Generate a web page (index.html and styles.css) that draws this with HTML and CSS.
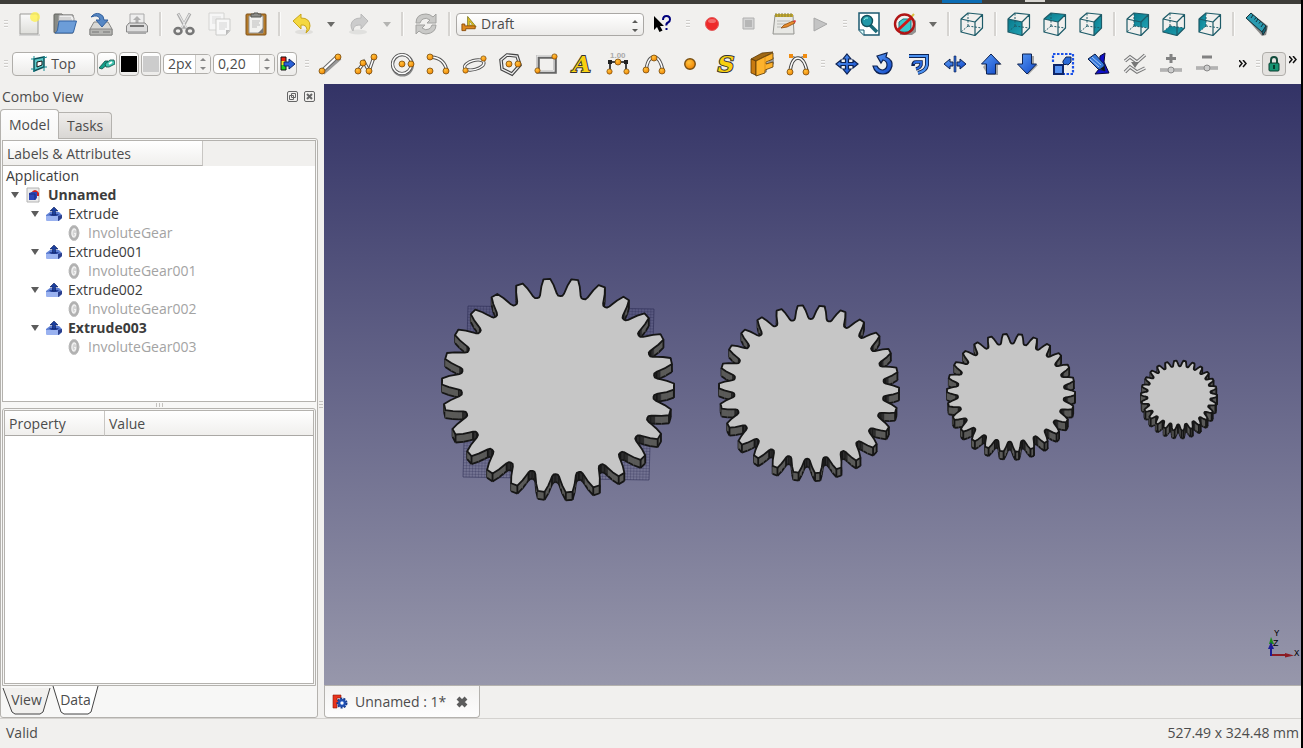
FILE: index.html
```
<!DOCTYPE html>
<html lang="en">
<head>
    <meta charset="UTF-8">
    <meta name="viewport" content="width=device-width, initial-scale=1.0">
    <title>FreeCAD</title>
    <link rel="stylesheet" href="styles.css">
</head>
<body>
    <!-- shared icon parts -->
    <svg class="sprite" aria-hidden="true">
        <defs>
            <radialGradient id="orange" cx="0.4" cy="0.35" r="0.7">
                <stop offset="0" stop-color="#ffc23c"/>
                <stop offset="1" stop-color="#f08000"/>
            </radialGradient>
            <linearGradient id="teal" x1="0" y1="0" x2="1" y2="1">
                <stop offset="0" stop-color="#087a8c"/>
                <stop offset="1" stop-color="#22a2b4"/>
            </linearGradient>
            <linearGradient id="blue" x1="0" y1="0" x2="1" y2="1">
                <stop offset="0" stop-color="#5b9cf5"/>
                <stop offset="1" stop-color="#1048c8"/>
            </linearGradient>
            <linearGradient id="paper" x1="0" y1="0" x2="0" y2="1">
                <stop offset="0" stop-color="#fafafa"/>
                <stop offset="1" stop-color="#dededa"/>
            </linearGradient>
            <linearGradient id="sky" x1="0" y1="0" x2="0" y2="1">
                <stop offset="0" stop-color="#333366"/>
                <stop offset="1" stop-color="#9797ab"/>
            </linearGradient>
        </defs>
        <symbol id="dot" viewBox="0 0 8 8">
            <circle cx="4" cy="4" r="3" fill="url(#orange)" stroke="#7a5010" stroke-width="0.8"/>
        </symbol>
        <symbol id="cube" viewBox="0 0 24 24">
            <g fill="none" stroke="#1d5b68" stroke-width="1.2" stroke-linejoin="round">
                <path d="M8 14V1M8 14l14 2M8 14l-7 6" stroke-dasharray="2 1.5" stroke-width="1"/>
                <path d="M1 7l14 3v13.500L1 20zM1 7l7-6 14.500 1.500L15 10M22.500 2.500V16L15 23.500"/>
            </g>
        </symbol>
        <symbol id="extrude" viewBox="0 0 16 16">
            <path d="M0 9l4-3h9l3 3v3l-3 3H1l-1-2z" fill="#5f80d4"/>
            <path d="M0 10h12v5H1l-1-1z" fill="#9ab2f0"/>
            <path d="M12 10l4-1v3l-4 3z" fill="#2b3f8c"/>
            <path d="M3 8h10l-2 2H5z" fill="#27429c"/>
            <path d="M8 1l4 4h-2.500v4h-3V5H4z" fill="#1c3f9c" stroke="#0c1c5c" stroke-width="0.6"/>
        </symbol>
        <symbol id="gear" viewBox="0 0 16 16">
            <ellipse cx="8" cy="8" rx="4" ry="6.500" fill="#d4d4d4" stroke="#b0b0b0" stroke-width="2.500"/>
            <ellipse cx="8" cy="8" rx="5" ry="7.500" fill="none" stroke="#c4c4c4" stroke-dasharray="1.500 1"/>
            <path d="M10 5.500q-1-2-2.500-1T6 8q0 4 2 3.500l1.500-1V8.500H8" fill="none" stroke="#f2f2f2" stroke-width="1.200"/>
        </symbol>
    </svg>

    <div class="topstrip"><span class="strip-blue"></span><span class="strip-grey"></span></div>

    <nav class="toolbar" aria-label="File and view tools">
        <span class="handle first"></span>
        <button class="tool" aria-label="New">
            <svg viewBox="0 0 24 24"><path d="M3 2h18v20H3z" fill="url(#paper)" stroke="#9b9b98"/><path d="M2 23h21" stroke="#bbb"/><circle cx="18" cy="5" r="5" fill="#fdf04a" opacity="0.75"/><circle cx="18" cy="5" r="2.500" fill="#fff36c"/></svg>
        </button>
        <button class="tool" aria-label="Open">
            <svg viewBox="0 0 24 24"><path d="M1 3q0-1 1-1h7l1 1h10v18H2q-1 0-1-1z" fill="#888a85" stroke="#62635f"/><path d="M6 3h13l2 3v6H5z" fill="#eee" stroke="#999"/><path d="M6 6h12M6 8h13" stroke="#bbb"/><path d="M6 9h17.500l-3 11q-.5 1-2 1H2q2-1 2.500-3z" fill="#6c9dd8" stroke="#3465a4"/></svg>
        </button>
        <button class="tool" aria-label="Save">
            <svg viewBox="0 0 24 24"><path d="M5 10h14l4 7v6H1v-6z" fill="#d8d8d5" stroke="#868684"/><path d="M1 17h22v6H1z" fill="#b5b5b2" stroke="#868684"/><path d="M3 20h7M14 20h7" stroke="#777"/><path d="M2 5q4-5 9-3 4 1.500 4 6h4l-6 7-6-7h4q0-3-3-4-2-.5-6 1z" fill="#5587c4" stroke="#33619e"/></svg>
        </button>
        <button class="tool" aria-label="Print">
            <svg viewBox="0 0 24 24"><path d="M5 2h14v13H5z" fill="#eee" stroke="#aaa"/><path d="M12 4l4 4h-2.500v4h-3V8H8z" fill="#b0b0b0"/><path d="M4 11h16l2.500 3v6h-21v-6z" fill="#ddd" stroke="#888"/><path d="M5 14h14" stroke="#777" stroke-width="2"/><path d="M3 20h18v2H3z" fill="#aaa"/></svg>
        </button>
        <span class="sep"></span>
        <button class="tool" aria-label="Cut">
            <svg viewBox="0 0 24 24"><path d="M6 1.500l8 15M18 1.500l-8 15" stroke="#aaa" stroke-width="3"/><path d="M6.500 2l8 14M17.500 2l-8 14" stroke="#e8e8e8" stroke-width="1.200"/><g fill="none" stroke="#777" stroke-width="2.500"><ellipse cx="6" cy="19" rx="3.500" ry="3"/><ellipse cx="18" cy="19" rx="3.500" ry="3"/></g></svg>
        </button>
        <button class="tool" aria-label="Copy">
            <svg viewBox="0 0 24 24"><path d="M1 1h15v17H1z" fill="#f6f6f6" stroke="#d4d4d2"/><path d="M4 5h9M4 7h9M4 9h4M4 11h4" stroke="#ddd"/><path d="M8 7h14v12l-4 4H8z" fill="#f8f8f8" stroke="#cbcbc9"/><path d="M11 11h8M11 13h8M11 15h8M11 17h6" stroke="#d4d4d4"/><path d="M22 18l-4 5v-5z" fill="#bbb"/></svg>
        </button>
        <button class="tool" aria-label="Paste">
            <svg viewBox="0 0 24 24"><rect x="2" y="2" width="20" height="21" rx="1" fill="#b47a28" stroke="#80521a"/><path d="M5 4h14v17H5z" fill="#f2f2f0" stroke="#999"/><path d="M8 9h8M8 11h7M8 13h8M8 15h5" stroke="#bbb"/><path d="M19 16l-5 5h5z" fill="#777"/><path d="M7 5V2h3V1h4v1h3v3z" fill="#8c8c88" stroke="#555753"/></svg>
        </button>
        <span class="sep"></span>
        <button class="tool" aria-label="Undo">
            <svg viewBox="0 0 24 24"><ellipse cx="13" cy="20" rx="9" ry="2.500" fill="#e0dfdc"/><path d="M2 9l8-7v4q9 0 9 8 0 4-4 7 2-4 0-6.500-2-2-5-1.500V17z" fill="#f4d840" stroke="#c9a51c"/></svg>
        </button>
        <button class="tool-arrow" aria-label="Undo list"></button>
        <button class="tool" aria-label="Redo">
            <svg viewBox="0 0 24 24"><ellipse cx="11" cy="20" rx="9" ry="2.500" fill="#e0e0de"/><path d="M21 9l-7-7v4q-9 0-10 7 0 4 2 6 0-4 3-5.500 2-.5 5-.5v4z" fill="#ccc" stroke="#bababa"/></svg>
        </button>
        <button class="tool-arrow faded" aria-label="Redo list"></button>
        <span class="sep"></span>
        <button class="tool" aria-label="Refresh">
            <svg viewBox="0 0 24 24"><g fill="#c9c9c7" stroke="#a2a2a0"><path d="M2 11q0-9 10-9 4 0 7 3l3-3v9h-9l3-3q-4-3-7-1-2 1-3 4z"/><path d="M22 13q0 8-10 9-4 0-7-3l-3 3v-9h9l-3 3q4 3 7 1 2-1 3-4z"/></g></svg>
        </button>
        <span class="sep"></span>
        <div class="workbench">
            <svg class="wb-icon" viewBox="0 0 18 16"><path d="M7 11V0l9 11z" fill="#e2c21c" stroke="#8a8430"/><path d="M9 9V5l3 4z" fill="#f6f5f2" stroke="#8a8430" stroke-width="0.600"/><path d="M1 8h3v2h11v3H5v2H1z" fill="#e08a1c" stroke="#8c4c08"/></svg>
            <select aria-label="Workbench"><option>Draft</option></select>
            <svg class="wb-arrows" viewBox="0 0 6 12"><path d="M0 3l3-3 3 3zM0 9l3 3 3-3z" fill="#5b5b58"/></svg>
        </div>
        <button class="tool" aria-label="What's this?">
            <svg viewBox="0 0 24 24"><path d="M3 4v14l3-3 2.500 5 3-1.500L9 14h4z"/><path d="M12 8q0-4 3.500-4T19 7.500q0 2-2 3t-1.500 3M15.500 16v2" fill="none" stroke="#00007c" stroke-width="2"/></svg>
        </button>
        <span class="handle"></span>
        <button class="tool" aria-label="Record macro">
            <svg viewBox="0 0 24 24"><circle cx="12" cy="12" r="6.500" fill="#ee2a2a" stroke="#e25c5c"/><ellipse cx="12" cy="9" rx="4" ry="2" fill="#f46a6a"/></svg>
        </button>
        <button class="tool" aria-label="Stop macro">
            <svg viewBox="0 0 24 24"><path d="M7 6h11v11H7z" fill="#d4d4d4" stroke="#b0b0b0"/><path d="M9 8h7v7H9z" fill="#b6b6b6"/></svg>
        </button>
        <button class="tool" aria-label="Macros">
            <svg viewBox="0 0 24 24"><path d="M3 3h18l1 19H1z" fill="#e8e8e4" stroke="#92928e"/><path d="M3 2h18v3H3z" fill="#c4a82c"/><path d="M4 1v4M7 1v4M10 1v4M13 1v4M16 1v4M19 1v4" stroke="#8a8238"/><path d="M5 9h13M5 12h9M5 15h4" stroke="#b8b8b4"/><path d="M9 16l3-3 9-4 2 2-8 4z" fill="#e88c2c" stroke="#8c4c10" stroke-width="0.800"/><path d="M21 9l2 2 1-2-1-1z" fill="#e04040"/></svg>
        </button>
        <button class="tool" aria-label="Run macro">
            <svg viewBox="0 0 24 24"><path d="M6 6l13 6-13 7z" fill="#c4c4c4" stroke="#a8a8a8"/></svg>
        </button>
        <span class="handle"></span>
        <button class="tool" aria-label="Fit all">
            <svg viewBox="0 0 24 24"><path d="M2 1h20v22H7l-5-5z" fill="#fff" stroke="#1c5a70" stroke-width="1.500"/><path d="M2 18h5v5" fill="#dff" stroke="#1c5a70"/><path d="M13 13l7 7" stroke="#1b6a78" stroke-width="3.500"/><circle cx="10" cy="9" r="5.500" fill="#2297a8" stroke="#14505c" stroke-width="1.400"/><path d="M7 8q1-3 4-2" stroke="#9fe" fill="none"/></svg>
        </button>
        <button class="tool" aria-label="Draw style">
            <svg viewBox="0 0 24 24"><path d="M6 10l4-4h10l3 3v11l-4 3H7z" fill="#333" opacity="0.500"/><circle cx="11.500" cy="12" r="9.500" fill="#f1f0ee"/><path d="M6 10l4-3h8v10l-3 3H6z" fill="#3cc8cc" stroke="#1c7480"/><path d="M13 11l8-9" stroke="#d8c040" stroke-width="2"/><circle cx="11.500" cy="12" r="9.500" fill="none" stroke="#b01414" stroke-width="2.400"/><path d="M5 18L18 6" stroke="#d01818" stroke-width="2.800"/></svg>
        </button>
        <button class="tool-arrow" aria-label="Draw style list"></button>
        <span class="sep"></span>
        <button class="tool" aria-label="Axonometric"><svg viewBox="0 0 24 24"><use href="#cube"/></svg></button>
        <span class="sep"></span>
        <button class="tool" aria-label="Front"><svg viewBox="0 0 24 24"><path d="M1 7l14 3v13.500L1 20z" fill="url(#teal)"/><use href="#cube"/></svg></button>
        <button class="tool" aria-label="Top"><svg viewBox="0 0 24 24"><path d="M1 7l7-6 14.500 1.500L15 10z" fill="url(#teal)"/><use href="#cube"/></svg></button>
        <button class="tool" aria-label="Right"><svg viewBox="0 0 24 24"><path d="M15 10l7.500-7.500V16L15 23.500z" fill="url(#teal)"/><use href="#cube"/></svg></button>
        <span class="sep"></span>
        <button class="tool" aria-label="Rear"><svg viewBox="0 0 24 24"><path d="M8 1l14.500 1.500V16L8 14z" fill="url(#teal)"/><use href="#cube"/></svg></button>
        <button class="tool" aria-label="Bottom"><svg viewBox="0 0 24 24"><path d="M1 20l7-6 14.500 2-7.500 7.500z" fill="url(#teal)"/><use href="#cube"/></svg></button>
        <button class="tool" aria-label="Left"><svg viewBox="0 0 24 24"><path d="M1 7l7-6v13l-7 6z" fill="url(#teal)"/><use href="#cube"/></svg></button>
        <span class="sep"></span>
        <button class="tool" aria-label="Measure distance">
            <svg viewBox="0 0 24 24"><path d="M2 7l4-6 17 13-2 9-4 1z" fill="#333" opacity="0.550"/><path d="M1 6l5-5 15 13-4 6z" fill="#2a9ab0" stroke="#17343c"/><path d="M17 20l4-6v4l-3 5z" fill="#176878" stroke="#17343c"/><path d="M8 3l-2 3M11 5.500l-1.500 2M13 7l-2 3M15.500 9.500l-1.500 2M18 12l-2 3" stroke="#12303a"/></svg>
        </button>
    </nav>

    <nav class="toolbar" aria-label="Draft tools">
        <span class="handle first"></span>
        <div class="draft-tray">
            <button class="box plane">
                <svg viewBox="0 0 16 16"><path d="M3 3l10-2v10L3 15z" fill="#5ccaca" stroke="#0c5058" stroke-width="1.500"/><path d="M6 6l5-1v4l-5 2z" fill="#fff" stroke="#111"/><path d="M3 0v3H0M13 0v2l3-1M0 13h3v3M13 11h3M13 11v4" stroke="#138a90" fill="none"/></svg>
                <span>Top</span>
            </button>
            <button class="box small" aria-label="Construction mode">
                <svg viewBox="0 0 16 16"><path d="M0 12l6-7 3 0v3l-6 5z" fill="#14a08c" stroke="#0c4c44" stroke-width="0.800"/><path d="M6 8l5-4h4l1 4-6 3H7z" fill="#40c4b0" stroke="#0c4c44" stroke-width="0.800"/><path d="M10 8l3-2" stroke="#fff" stroke-width="2"/></svg>
            </button>
            <button class="box small" aria-label="Line colour"><span class="swatch black"></span></button>
            <button class="box small" aria-label="Face colour"><span class="swatch grey"></span></button>
            <div class="spin spin-width">
                <input type="text" value="2px" aria-label="Line width">
                <div class="spin-buttons"><button class="up" aria-label="Increase width"></button><button class="down" aria-label="Decrease width"></button></div>
            </div>
            <div class="spin spin-size">
                <input type="text" value="0,20" aria-label="Font size">
                <div class="spin-buttons"><button class="up" aria-label="Increase size"></button><button class="down" aria-label="Decrease size"></button></div>
            </div>
            <button class="box small" aria-label="Apply style">
                <svg viewBox="0 0 16 16"><path d="M2 1h5v5H2z" fill="#f02010"/><path d="M2 5h5v5H2z" fill="#f8e020"/><path d="M2 9h5v5H2z" fill="#20d020"/><path d="M2 1h5v13H2z" fill="none" stroke="#111"/><path d="M5 6h5V3l6 5-6 5v-3H5z" fill="#2a62d8" stroke="#0c2468"/></svg>
            </button>
        </div>
        <span class="handle wide"></span>
        <button class="tool" aria-label="Line">
            <svg viewBox="0 0 24 24"><path d="M5 21L22 6" stroke="#999" stroke-width="4"/><path d="M4 19L20 4" stroke="#666" stroke-width="4"/><path d="M4 19L20 4" stroke="#fff" stroke-width="2.200"/><use href="#dot" x="0" y="15" width="8" height="8"/><use href="#dot" x="16" y="1" width="8" height="8"/></svg>
        </button>
        <button class="tool" aria-label="Wire">
            <svg viewBox="0 0 24 24"><path d="M4 19l6-9 5 9 5-14" fill="none" stroke="#555" stroke-width="3.500"/><path d="M4 19l6-9 5 9 5-14" fill="none" stroke="#fff" stroke-width="1.500"/><use href="#dot" x="0" y="15" width="8" height="8"/><use href="#dot" x="5" y="7" width="8" height="8"/><use href="#dot" x="11" y="15" width="8" height="8"/><use href="#dot" x="16" y="1" width="8" height="8"/></svg>
        </button>
        <button class="tool" aria-label="Circle">
            <svg viewBox="0 0 24 24"><circle cx="12.500" cy="13" r="10" fill="none" stroke="#888" stroke-width="3"/><circle cx="12" cy="12" r="9.500" fill="none" stroke="#555" stroke-width="3.200"/><circle cx="12" cy="12" r="9.500" fill="none" stroke="#fff" stroke-width="1.600"/><use href="#dot" x="8" y="8" width="8" height="8"/><use href="#dot" x="17" y="8" width="8" height="8"/></svg>
        </button>
        <button class="tool" aria-label="Arc">
            <svg viewBox="0 0 24 24"><path d="M5 5q14 1 16 15" fill="none" stroke="#555" stroke-width="3.500"/><path d="M5 5q14 1 16 15" fill="none" stroke="#fff" stroke-width="1.500"/><use href="#dot" x="0" y="1" width="8" height="8"/><use href="#dot" x="0" y="15" width="8" height="8"/><use href="#dot" x="16" y="15" width="8" height="8"/></svg>
        </button>
        <button class="tool" aria-label="Ellipse">
            <svg viewBox="0 0 24 24"><g fill="none" transform="rotate(-15 12 12)"><ellipse cx="12" cy="13" rx="10" ry="4.500" stroke="#555" stroke-width="3.200"/><ellipse cx="12" cy="13" rx="10" ry="4.500" stroke="#fff" stroke-width="1.400"/></g><use href="#dot" x="0" y="15" width="7" height="7"/><use href="#dot" x="18" y="3" width="7" height="7"/></svg>
        </button>
        <button class="tool" aria-label="Polygon">
            <svg viewBox="0 0 24 24"><g fill="none"><path d="M9 3l10 1 3 9-8 9-10-5-1-9z" stroke="#444" stroke-width="3.500"/><path d="M9 3l10 1 3 9-8 9-10-5-1-9z" stroke="#eee" stroke-width="1.300"/></g><use href="#dot" x="7" y="8" width="8" height="8"/><use href="#dot" x="16" y="8" width="8" height="8"/></svg>
        </button>
        <button class="tool" aria-label="Rectangle">
            <svg viewBox="0 0 24 24"><g fill="none"><path d="M4 5h17v15H4z" stroke="#666" stroke-width="3.600"/><path d="M3 4h17v15H3z" stroke="#eee" stroke-width="1.300"/></g><use href="#dot" x="0" y="15" width="7" height="7"/><use href="#dot" x="17" y="1" width="7" height="7"/></svg>
        </button>
        <button class="tool" aria-label="Text"><span class="glyph">A</span></button>
        <button class="tool" aria-label="Dimension">
            <svg viewBox="0 0 24 24"><path d="M4 20V10h16v10" fill="none" stroke="#444" stroke-width="2"/><path d="M2 8h4v4H2zM18 8h4v4h-4z" fill="#222"/><use href="#dot" x="8" y="6" width="8" height="8"/><use href="#dot" x="0" y="16" width="7" height="7"/><use href="#dot" x="17" y="16" width="7" height="7"/><text x="4" y="6" class="dim-text">1.00</text></svg>
        </button>
        <button class="tool" aria-label="B-spline">
            <svg viewBox="0 0 24 24"><g fill="none"><path d="M4 18Q6 5 12 5t9 14" stroke="#555" stroke-width="3.500"/><path d="M4 18Q6 5 12 5t9 14" stroke="#fff" stroke-width="1.500"/></g><use href="#dot" x="0" y="14" width="8" height="8"/><use href="#dot" x="8" y="2" width="8" height="8"/><use href="#dot" x="16" y="15" width="8" height="8"/></svg>
        </button>
        <button class="tool" aria-label="Point"><svg viewBox="0 0 24 24"><use href="#dot" x="5" y="5" width="14" height="14"/></svg></button>
        <button class="tool" aria-label="Shape from text"><span class="glyph">S</span></button>
        <button class="tool" aria-label="Facebinder">
            <svg viewBox="0 0 24 24"><path d="M3 22l3 2 11-4v-4l7-4V5z" fill="#444" opacity="0.500"/><path d="M1 7l11-6 11-1-9 5-8 4z" fill="#a06814" stroke="#5c3804" stroke-width="0.800"/><path d="M1 7l5 2v14l-5-2z" fill="#c87a10" stroke="#5c3804" stroke-width="0.800"/><path d="M6 9l8-4 9-4v6l-7 3v2l7-2v5l-8 3v3l-9 3z" fill="#fdb22c" stroke="#5c3804" stroke-width="0.800"/><path d="M15 5v14" stroke="#d88c14" stroke-width="0.800"/></svg>
        </button>
        <button class="tool" aria-label="Bezier curve">
            <svg viewBox="0 0 24 24"><g fill="none"><path d="M4 4l8 2M20 4l-8 2" stroke="#555"/><path d="M4 19Q6 6 12 6t9 13" stroke="#444" stroke-width="3.500"/><path d="M4 19Q6 6 12 6t9 13" stroke="#fff" stroke-width="1.500"/></g><path d="M3 2h4v4H3zM17 2h4v4h-4z" fill="#f08c10"/><use href="#dot" x="0" y="16" width="8" height="8"/><use href="#dot" x="16" y="16" width="8" height="8"/></svg>
        </button>
        <span class="handle"></span>
        <button class="tool" aria-label="Move">
            <svg viewBox="0 0 24 24"><path d="M12 2l4 5h-2.500v3.500H18V8l5 4-5 4v-2.500h-4.500V17H16l-4 5-4-5h2.500v-3.500H6V16l-5-4 5-4v2.500h4.500V7H8z" fill="url(#blue)" stroke="#0d2252" stroke-width="1.200"/></svg>
        </button>
        <button class="tool" aria-label="Rotate">
            <svg viewBox="0 0 24 24"><path d="M6 4l10-3-1 4q7 3 6 9-2 8-9 8-8 0-10-8h4q2 4 6 4 4-1 4-5t-4-5l-2 3z" fill="url(#blue)" stroke="#0d2252" stroke-width="1.200"/></svg>
        </button>
        <button class="tool" aria-label="Offset">
            <svg viewBox="0 0 24 24"><path d="M2 4h18v9q-1 6-9 8" fill="none" stroke="#0d2252" stroke-width="4"/><path d="M2 4h18v9q-1 6-9 8" fill="none" stroke="#4a90f0" stroke-width="2.200"/><path d="M6 14q0-4 3-4h5v3q-1 3-5 4" fill="none" stroke="#0d2252" stroke-width="3.500"/><path d="M7 12q0-2 2-2h5v3q-1 3-5 4" fill="none" stroke="#2c6ce0" stroke-width="1.800"/></svg>
        </button>
        <button class="tool" aria-label="Trim or extend">
            <svg viewBox="0 0 24 24"><path d="M1 12l6-5v3h3v4H7v3zM23 12l-6-5v3h-3v4h3v3z" fill="url(#blue)" stroke="#0d2252"/><path d="M11 4h2v16h-2z" fill="#2c66d0" stroke="#0d2252" stroke-width="0.600"/></svg>
        </button>
        <button class="tool" aria-label="Upgrade">
            <svg viewBox="0 0 24 24"><path d="M4 15L14 4l9 9h-4v10H9z" fill="#555" opacity="0.500"/><path d="M12 2l9.500 10H16.500v10h-9V12H2.500z" fill="url(#blue)" stroke="#0d2252"/></svg>
        </button>
        <button class="tool" aria-label="Downgrade">
            <svg viewBox="0 0 24 24"><path d="M10 4h9v9l4 0-10 10z" fill="#555" opacity="0.500"/><path d="M12 22l9.500-10H16.500V2h-9v10H2.500z" fill="url(#blue)" stroke="#0d2252"/></svg>
        </button>
        <button class="tool" aria-label="Scale">
            <svg viewBox="0 0 24 24"><path d="M2 10V2h20v20H12" fill="none" stroke="#1c52e8" stroke-width="2.200" stroke-dasharray="2.500 1.500"/><path d="M3 13h9v9H3z" fill="#5490f0" stroke="#0d2468" stroke-width="2"/><path d="M12 9l3-4h5v5l-3 3-2-1-1 1-2-2z" fill="#2a6ad8" stroke="#0d2252"/></svg>
        </button>
        <button class="tool" aria-label="Edit">
            <svg viewBox="0 0 24 24"><path d="M13 4l5-3-1 9 5 11-14 1 4-5z" fill="#1010c8" stroke="#080838"/><path d="M1 7l7-5 9 10 1 7-7-2z" fill="#3476d8" stroke="#0d1c44"/><path d="M3 7l9 8M5 5l9 8" stroke="#a8c8f4"/><path d="M13 17l5 2-1-5z" fill="#111"/></svg>
        </button>
        <button class="tool" aria-label="Wire to B-spline">
            <svg viewBox="0 0 24 24"><g fill="none"><path d="M2 9l5-4 7 5 8-7M2 20l5-5 7 5 8-4" stroke="#777" stroke-width="3.500"/><path d="M2 9l5-4 7 5 8-7M2 20l5-5 7 5 8-4" stroke="#ececec" stroke-width="1.500"/></g><path d="M8 10l8 0-4 6z" fill="#777"/></svg>
        </button>
        <button class="tool" aria-label="Add point">
            <svg viewBox="0 0 24 24"><path d="M12 2v9M7 6.500h10" stroke="#828282" stroke-width="3"/><path d="M1 18h22" stroke="#888" stroke-width="3"/><path d="M1 18h22" stroke="#ddd"/><circle cx="12" cy="18" r="3" fill="#ccc" stroke="#888"/></svg>
        </button>
        <button class="tool" aria-label="Delete point">
            <svg viewBox="0 0 24 24"><path d="M7 5h10" stroke="#828282" stroke-width="3"/><path d="M1 16h22" stroke="#888" stroke-width="3"/><path d="M1 16h22" stroke="#ddd"/><circle cx="12" cy="16" r="3" fill="#ccc" stroke="#888"/></svg>
        </button>
        <button class="more" aria-label="More draft tools"><svg viewBox="0 0 8 8"><path d="M0 0l3 3.500L0 7M4 0l3 3.500L4 7" fill="none" stroke="#111" stroke-width="1.500"/></svg></button>
        <span class="handle lock-handle"></span>
        <button class="box lock" aria-label="Snap lock">
            <svg viewBox="0 0 16 18"><path d="M5 9V5q0-3 3-3t3 3v4" fill="none" stroke="#114c3c" stroke-width="2"/><rect x="3" y="8" width="10" height="8" rx="1" fill="#169472" stroke="#0b3c2e"/><path d="M8 10v4" stroke="#0b3c2e" stroke-width="2"/></svg>
        </button>
        <button class="more last" aria-label="More snap tools"><svg viewBox="0 0 8 8"><path d="M0 0l3 3.500L0 7M4 0l3 3.500L4 7" fill="none" stroke="#111" stroke-width="1.500"/></svg></button>
    </nav>

    <main class="workspace">
        <aside class="combo">
            <div class="combo-title">
                <span>Combo View</span>
                <button class="dock-button" aria-label="Float"><svg viewBox="0 0 11 11"><rect x="0.500" y="0.500" width="10" height="10" rx="1.500"/><path d="M4.500 2.500h4v4h-4zM2.500 4.500h4v4h-4z"/></svg></button>
                <button class="dock-button" aria-label="Close"><svg viewBox="0 0 11 11"><rect x="0.500" y="0.500" width="10" height="10" rx="1.500"/><path d="M3 3l5 5M8 3l-5 5" stroke-width="2"/></svg></button>
            </div>
            <div class="tabs">
                <button class="tab active">Model</button>
                <button class="tab">Tasks</button>
            </div>
            <div class="pane">
                <div class="tree">
                    <div class="tree-head"><span>Labels &amp; Attributes</span></div>
                    <ul>
                        <li class="app">Application</li>
                        <li class="level1"><i class="expander"></i><svg viewBox="0 0 16 16"><path d="M1 1h12v14H1z" fill="#ebebeb" stroke="#b4b4b4"/><path d="M5 6q4-6 8 0v3H6z" fill="#d02020"/><path d="M3 6l3-1h5v6l-2 2H3z" fill="#2c46b8"/><path d="M9 7v6M3 7h6" stroke="#1a2a80"/></svg><b>Unnamed</b></li>
                        <li class="level2"><i class="expander"></i><svg><use href="#extrude"/></svg>Extrude</li>
                        <li class="level3"><svg><use href="#gear"/></svg>InvoluteGear</li>
                        <li class="level2"><i class="expander"></i><svg><use href="#extrude"/></svg>Extrude001</li>
                        <li class="level3"><svg><use href="#gear"/></svg>InvoluteGear001</li>
                        <li class="level2"><i class="expander"></i><svg><use href="#extrude"/></svg>Extrude002</li>
                        <li class="level3"><svg><use href="#gear"/></svg>InvoluteGear002</li>
                        <li class="level2"><i class="expander"></i><svg><use href="#extrude"/></svg><b>Extrude003</b></li>
                        <li class="level3"><svg><use href="#gear"/></svg>InvoluteGear003</li>
                    </ul>
                </div>
                <div class="splitter"><i></i><i></i><i></i></div>
                <div class="properties">
                    <div class="properties-inner">
                        <table>
                            <thead><tr><th class="prop-col">Property</th><th>Value</th></tr></thead>
                        </table>
                    </div>
                </div>
                <div class="bottom-tabs">
                    <button class="slant"><svg viewBox="0 0 50 30"><path d="M1 2l9 24 3 2h25l3-2 7-24" fill="#f1f0ee" stroke="#444"/></svg><span>View</span></button>
                    <button class="slant active"><svg viewBox="0 0 50 30"><path d="M2 0l8 26 3 2h24l3-2 7-26" fill="#fff" stroke="#444"/></svg><span>Data</span></button>
                </div>
            </div>
            <div class="side-grip"><i></i><i></i><i></i></div>
        </aside>

        <section class="viewer">
            <svg class="scene" viewBox="0 0 977 601" preserveAspectRatio="none">
                <rect width="977" height="601" fill="url(#sky)"/>
                <g id="grid"></g>
                <g id="gears"></g>
                <g class="axes">
                    <path d="M947 571V560" stroke="#1c8c1c" stroke-width="2"/>
                    <path d="M947 553l3 7h-5z" fill="#1c8c1c"/>
                    <path d="M947 571h15" stroke="#8c1c24" stroke-width="2"/>
                    <path d="M961 569l9 2.500-9 2z" fill="#8c1c24"/>
                    <path d="M947 572v-8" stroke="#1c1c96" stroke-width="2"/>
                    <path d="M947 558l3 7h-6z" fill="#1c1c96"/>
                    <text x="950" y="552">Y</text>
                    <text x="949" y="562">Z</text>
                    <text x="970" y="572">X</text>
                </g>
            </svg>
            <div class="doc-tabs">
                <div class="doc-tab">
                    <svg viewBox="0 0 16 16"><path d="M1 1h8v3H5v2h4v3H5v5H1z" fill="#e8341c" stroke="#8c1408" stroke-width="0.600"/><circle cx="10" cy="9" r="4" fill="#5f8fe8" stroke="#173a8c" stroke-width="3" stroke-dasharray="1.800 1"/><circle cx="10" cy="9" r="3" fill="none" stroke="#214fae" stroke-width="2"/><circle cx="10" cy="9" r="1.500" fill="#fff"/></svg>
                    <span>Unnamed : 1*</span>
                    <button aria-label="Close document"><svg viewBox="0 0 14 14"><path d="M3 3l8 8M11 3l-8 8" stroke="#5c5c5c" stroke-width="4"/></svg></button>
                </div>
            </div>
        </section>
    </main>

    <footer class="statusbar">
        <span>Valid</span>
        <span>527.49 x 324.48 mm</span>
    </footer>
    <script src="scene.js"></script>
</body>
</html>
```
FILE: styles.css
```
* {
    box-sizing: border-box;
}
body {
    margin: 0;
    height: 100vh;
    display: flex;
    flex-direction: column;
    overflow: hidden;
    border-right: 2px solid #000;
    background: #f1f0ee;
    color: #4c4c4c;
    font-family: "Open Sans", "Noto Sans", sans-serif;
    font-size: 14px;
    line-height: 20px;
}
button, input, select {
    font: inherit;
    color: inherit;
    margin: 0;
    padding: 0;
    border: none;
    background: none;
}
svg {
    display: block;
    flex: none;
}
.sprite {
    position: absolute;
    width: 0;
    height: 0;
}

/* bottom edge of the desktop panel */
.topstrip {
    height: 4px;
    flex: none;
    display: flex;
    justify-content: flex-end;
    background: #3e3d39;
    padding-right: 256px;
}
.strip-blue {
    width: 40px;
    height: 3px;
    margin-right: 43px;
    background: #0a6cb4;
}
.strip-grey {
    width: 20px;
    height: 2px;
    background: #d8d6d2;
}

/* toolbars */
.toolbar {
    display: flex;
    align-items: center;
    height: 40px;
    flex: none;
}
.tool {
    width: 36px;
    height: 36px;
    flex: none;
    display: flex;
    align-items: center;
    justify-content: center;
}
.tool svg {
    width: 24px;
    height: 24px;
    overflow: visible;
}
.tool-arrow {
    width: 20px;
    height: 36px;
    flex: none;
    display: flex;
    align-items: center;
    justify-content: center;
}
.tool-arrow::after {
    content: "";
    border: 4px solid transparent;
    border-top: 5px solid #6b6b68;
    border-bottom: none;
}
.faded::after {
    border-top-color: #b4b4b2;
}
.handle {
    width: 13px;
    height: 8px;
    flex: none;
    display: flex;
    justify-content: center;
}
.handle::after {
    content: "";
    width: 4px;
    height: 8px;
    background: repeating-linear-gradient(#cfcdca 0 1px, #fafafa 1px 2px, #f1f0ee 2px 3px);
}
.handle.first {
    width: 12px;
}
.toolbar .first + .tool {
    margin-left: -1px;
}
.handle.wide {
    width: 15px;
    padding-left: 5px;
}
.handle.lock-handle {
    width: 9px;
}
.sep {
    width: 11px;
    height: 24px;
    flex: none;
    display: flex;
    justify-content: center;
}
.sep::after {
    content: "";
    width: 2px;
    background: #d6d4d1;
    border-right: 1px solid #fbfbfa;
}
.workbench {
    position: relative;
    width: 188px;
    height: 23px;
    margin: 0 1px;
    flex: none;
}
.workbench select {
    width: 100%;
    height: 23px;
    appearance: none;
    padding-left: 24px;
    border: 1px solid #aaa8a5;
    border-radius: 4px;
    background: linear-gradient(#fff, #ecebe9);
    line-height: 20px;
}
.wb-icon {
    position: absolute;
    left: 5px;
    top: 3px;
    width: 17px;
    height: 16px;
}
.wb-arrows {
    position: absolute;
    right: 6px;
    top: 7px;
    width: 6px;
    height: 12px;
}

.draft-tray {
    display: flex;
    gap: 2px;
    align-items: center;
}
.box {
    height: 24px;
    border: 1px solid #b0aeaa;
    border-radius: 4px;
    background: linear-gradient(#fff, #ecebe9);
    display: flex;
    align-items: center;
    justify-content: center;
    flex: none;
}
.plane {
    width: 83px;
    gap: 4px;
}
.plane svg, .small svg {
    width: 16px;
    height: 16px;
}
.small {
    width: 20px;
}
.swatch {
    width: 16px;
    height: 16px;
    flex: none;
}
.black {
    background: #000;
}
.grey {
    background: #ccc;
}
.spin {
    height: 20px;
    display: flex;
    border: 1px solid #b0aeaa;
    border-radius: 4px;
    background: #fff;
    overflow: hidden;
}
.spin-width {
    width: 48px;
}
.spin-size {
    width: 62px;
}
.spin input {
    flex: 1;
    min-width: 0;
    width: 0;
    padding-left: 4px;
    line-height: 18px;
}
.spin-buttons {
    width: 15px;
    display: flex;
    flex-direction: column;
    align-items: center;
    justify-content: space-around;
    border-left: 1px solid #d0ceca;
    background: #f4f3f1;
}
.up, .down {
    border: 3px solid transparent;
}
.up {
    border-top: none;
    border-bottom-color: #888;
}
.down {
    border-bottom: none;
    border-top-color: #888;
}
.glyph {
    font-family: "DejaVu Serif", serif;
    font-size: 23px;
    font-weight: bold;
    font-style: italic;
    line-height: 24px;
    color: #f8d010;
    -webkit-text-stroke: 2px #333;
    paint-order: stroke fill;
}
.dim-text {
    font: bold 8px "Liberation Sans", sans-serif;
    fill: #aaa;
}
.more {
    width: 28px;
    height: 24px;
    flex: none;
    display: flex;
    align-items: center;
    justify-content: center;
    padding-left: 8px;
}
.more svg {
    width: 8px;
    height: 8px;
}
.lock {
    width: 24px;
    background: #e4e2df;
}
.lock svg {
    width: 16px;
    height: 18px;
}
.more.last {
    width: 12px;
    padding: 0 0 8px 2px;
}

/* workspace */
.workspace {
    flex: 1;
    min-height: 0;
    display: flex;
}
.combo {
    position: relative;
    width: 324px;
    flex: none;
    display: flex;
    flex-direction: column;
    padding-right: 6px;
}
.combo-title {
    display: flex;
    align-items: center;
    gap: 6px;
    height: 25px;
    flex: none;
    padding: 0 3px 0 2px;
}
.combo-title span {
    flex: 1;
}
.dock-button svg {
    width: 11px;
    height: 11px;
    fill: none;
    stroke: #666;
}
.tabs {
    display: flex;
    align-items: flex-end;
    height: 29px;
    flex: none;
}
.tab {
    height: 26px;
    padding: 0 8px;
    border: 1px solid #b4b2ae;
    border-left: none;
    border-bottom: none;
    border-radius: 0 4px 0 0;
    background: linear-gradient(#efedeb, #d9d7d4);
}
.tab.active {
    position: relative;
    height: 30px;
    margin-bottom: -1px;
    border-left: 1px solid #b4b2ae;
    border-radius: 4px 4px 0 0;
    background: linear-gradient(#fdfdfd, #f7f7f6);
}
.pane {
    flex: 1;
    min-height: 0;
    display: flex;
    flex-direction: column;
    border: 1px solid #b4b2ae;
    border-radius: 0 3px 3px 3px;
    background: #f7f7f6;
    padding: 1px 1px 0;
}
.tree {
    flex: none;
    height: 262px;
    border: 1px solid #b4b2ae;
    background: #fff;
    color: #3c3c3c;
}
.tree-head {
    height: 25px;
    background: #f1f0ee;
}
.tree-head span {
    display: block;
    width: 200px;
    height: 25px;
    padding: 3px 4px 0;
    border-right: 1px solid #c8c6c3;
    border-bottom: 1px solid #b4b2ae;
    background: linear-gradient(#fff, #f0efed);
    color: #4c4c4c;
}
.tree ul {
    list-style: none;
    margin: 0;
    padding: 0;
}
.tree li {
    display: flex;
    align-items: center;
    height: 19px;
    line-height: 19px;
}
.tree li svg {
    width: 16px;
    height: 16px;
    margin-right: 6px;
}
.tree .app {
    padding-left: 3px;
}
.level1 {
    padding-left: 8px;
}
.level2 {
    padding-left: 28px;
}
.level3 {
    padding-left: 63px;
}
.tree .level3 {
    color: #a3a3a3;
}
.expander {
    width: 8px;
    margin-right: 7px;
    border: 4px solid transparent;
    border-top: 6px solid #5c5c5c;
    border-bottom: none;
}
.splitter {
    height: 6px;
    flex: none;
    display: flex;
    align-items: center;
    justify-content: center;
    gap: 2px;
}
.splitter i {
    width: 1px;
    height: 4px;
    background: #c4c2bf;
}
.properties {
    flex: 1;
    min-height: 0;
    border: 1px solid #b4b2ae;
    border-radius: 3px 3px 0 0;
    padding: 1px;
}
.properties-inner {
    height: 100%;
    border: 1px solid #b4b2ae;
    background: #fff;
}
.properties table {
    width: 100%;
    border-spacing: 0;
    table-layout: fixed;
}
.properties th {
    height: 25px;
    padding: 2px 4px 0;
    text-align: left;
    font-weight: normal;
    border-bottom: 1px solid #aaa8a5;
    background: linear-gradient(#fff, #f0efed);
}
.properties .prop-col {
    width: 100px;
    border-right: 1px solid #c8c6c3;
}
.bottom-tabs {
    height: 31px;
    flex: none;
    display: flex;
}
.slant {
    position: relative;
    width: 49px;
    height: 28px;
}
.slant svg {
    position: absolute;
    inset: 0;
    width: 50px;
    height: 30px;
}
.slant span {
    position: relative;
}
.side-grip {
    position: absolute;
    right: 1px;
    top: 50%;
    display: flex;
    flex-direction: column;
    gap: 2px;
}
.side-grip i {
    width: 4px;
    height: 1px;
    background: #c4c2bf;
}

.viewer {
    flex: 1;
    min-width: 0;
    display: flex;
    flex-direction: column;
}
.scene {
    flex: 1;
    min-height: 0;
    width: 100%;
}
.axes text {
    font: 9px "Liberation Mono", monospace;
    fill: #000;
}
.doc-tabs {
    height: 33px;
    flex: none;
    border-top: 1px solid #b4b2ae;
}
.doc-tab {
    display: flex;
    align-items: center;
    width: 156px;
    height: 32px;
    padding: 0 10px 0 7px;
    border: 1px solid #b4b2ae;
    border-top: none;
    border-radius: 0 0 4px 4px;
    background: linear-gradient(#f3f2f0, #fdfdfd);
}
.doc-tab span {
    flex: 1;
    padding-left: 7px;
}
.doc-tab svg {
    width: 16px;
    height: 16px;
}
.doc-tab button svg {
    width: 14px;
    height: 14px;
}
.statusbar {
    height: 30px;
    flex: none;
    display: flex;
    align-items: center;
    justify-content: space-between;
    border-top: 1px solid #d4d2cf;
    padding: 0 2px 2px 6px;
}
```
FILE: scene.js
```
// builds the extruded gears and the working-plane grid in the 3D view
const NS = 'http://www.w3.org/2000/svg';
const TEETH = 26;
const TURN = 1.4 * Math.PI / 180;

// tooth profile: radius, fraction of a pitch from the tooth axis
const PROFILE = [
    [0.832, -0.5], [0.836, -0.41], [0.856, -0.35], [0.89, -0.3], [0.94, -0.23], [1, -0.12],
    [1, 0.12], [0.94, 0.23], [0.89, 0.3], [0.856, 0.35], [0.836, 0.41]
];

const gears = [
    { x: 234, y: 300, rx: 116, ry: 107, depth: 8 },
    { x: 485, y: 304, rx: 90, ry: 84, depth: 8 },
    { x: 687, y: 308, rx: 64, ry: 59, depth: 8 },
    { x: 855, y: 311, rx: 38, ry: 35, depth: 8 }
];

function add(parent, d, attrs) {
    const path = document.createElementNS(NS, 'path');
    path.setAttribute('d', d);
    for (const key in attrs) {
        path.setAttribute(key, attrs[key]);
    }
    parent.appendChild(path);
}

function outline(gear) {
    const points = [];
    for (let t = 0; t < TEETH; t++) {
        PROFILE.forEach(([r, f]) => {
            const a = (t + f) * 2 * Math.PI / TEETH + TURN;
            const s = r * Math.sin(a);
            points.push([
                gear.x + gear.rx * r * Math.cos(a),
                gear.y + gear.ry * (s + 0.015 * s * s)
            ]);
        });
    }
    return points;
}

const gearGroup = document.getElementById('gears');
gears.forEach(gear => {
    const pts = outline(gear);
    const sides = pts.map((p, i) => {
        const q = pts[(i + 1) % pts.length];
        return { p, q, part: i % PROFILE.length, front: q[0] < p[0] };
    });
    sides.sort((a, b) => (a.front - b.front) || (a.p[1] - b.p[1]));
    sides.forEach(({ p, q, part }) => {
        const fillet = part < 2 || part > 7;
        const fill = fillet ? '#2c2c2c' : '#5a5a58';
        add(gearGroup, `M${p}L${q}l0 ${gear.depth}L${p[0]} ${p[1] + gear.depth}z`, {
            fill, stroke: fill, 'stroke-width': 0.5
        });
        let edges = `M${p[0]} ${p[1] + gear.depth}L${q[0]} ${q[1] + gear.depth}`;
        if ([0, 2, 5, 6, 9].includes(part)) {
            edges += `M${p}v${gear.depth}`;
        }
        add(gearGroup, edges, { stroke: '#161616', 'stroke-width': 1.8 });
    });
    add(gearGroup, 'M' + pts.join('L') + 'z', {
        fill: '#c6c6c6', stroke: '#161616', 'stroke-width': 1.8, 'stroke-linejoin': 'round'
    });
});

const grid = document.getElementById('grid');
const corner = [144, 222];
for (let i = 0; i <= 60; i++) {
    const k = i / 60;
    const opacity = i % 20 === 0 ? 0.5 : 0.25;
    const style = { stroke: '#22224a', 'stroke-width': 1, 'stroke-opacity': opacity };
    add(grid, `M${corner[0] + 186 * k} ${corner[1] + 3 * k}l-5 171`, style);
    add(grid, `M${corner[0] - 5 * k} ${corner[1] + 171 * k}l186 3`, style);
}
```
